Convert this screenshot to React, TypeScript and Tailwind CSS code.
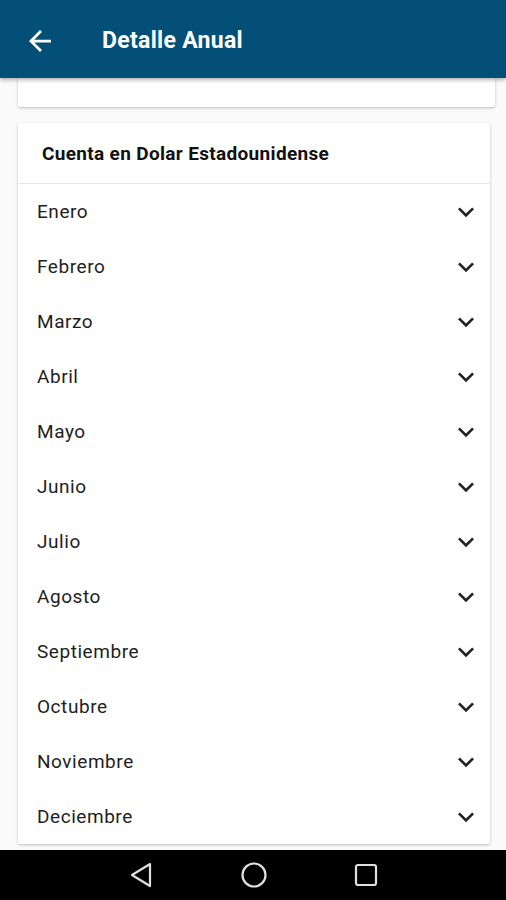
const months = [
  "Enero",
  "Febrero",
  "Marzo",
  "Abril",
  "Mayo",
  "Junio",
  "Julio",
  "Agosto",
  "Septiembre",
  "Octubre",
  "Noviembre",
  "Deciembre",
];

function ChevronDown() {
  return (
    <svg viewBox="0 0 24 24" className="h-[32px] w-[32px]" fill="#222">
      <path d="M16.59 8.59L12 13.17 7.41 8.59 6 10l6 6 6-6z" />
    </svg>
  );
}

export default function App() {
  return (
    <div
      className="flex h-[900px] w-[506px] flex-col overflow-hidden bg-[#fafafa]"
      style={{ fontFamily: "Roboto, 'Noto Sans', sans-serif" }}
    >
      <header className="relative z-10 flex h-[78px] shrink-0 items-center bg-[#034f78] pt-[4px] shadow-[0_2px_4px_rgba(0,0,0,0.3)]">
        <svg viewBox="4 4 16 16" className="ml-[28px] h-[22px] w-[24px]" fill="white">
          <path d="M20 11H7.83l5.59-5.59L12 4l-8 8 8 8 1.41-1.41L7.83 13H20v-2z" />
        </svg>
        <h1 className="ml-[50px] text-[23px] font-bold tracking-[0.3px] text-white">Detalle Anual</h1>
      </header>

      <div className="flex flex-1 flex-col">
        <div className="ml-[18px] mr-[11px] h-[29px] rounded-b-[2px] bg-white shadow-[0_1px_3px_rgba(0,0,0,0.25)]" />

        <div className="ml-[18px] mr-[16px] mt-[16px] rounded-[2px] bg-white shadow-[0_1px_3px_rgba(0,0,0,0.25)]">
          <div className="flex h-[61px] items-center border-b border-[#e6e6e6] pl-[24px] pt-[2px] text-[19px] font-bold tracking-[0.33px] text-[#111]">
            Cuenta en Dolar Estadounidense
          </div>
          {months.map((month) => (
            <div key={month} className="flex h-[55px] items-center justify-between pl-[19px] pr-[8px]">
              <span className="pt-[2px] text-[19px] tracking-[0.55px] text-[#1e1e1e]">{month}</span>
              <ChevronDown />
            </div>
          ))}
        </div>
      </div>

      <nav className="flex h-[50px] shrink-0 items-center bg-black">
        <svg viewBox="0 0 24 26" className="ml-[129px] h-[26px] w-[24px]" fill="none" stroke="#e0e0e0" strokeWidth="2.2" strokeLinejoin="round">
          <path d="M21 2 L3 13 L21 24 Z" />
        </svg>
        <svg viewBox="0 0 28 28" className="ml-[87px] h-[28px] w-[28px]" fill="none" stroke="#e0e0e0" strokeWidth="2.2">
          <circle cx="14" cy="14" r="11.5" />
        </svg>
        <svg viewBox="0 0 24 24" className="ml-[86px] h-[24px] w-[24px]" fill="none" stroke="#e0e0e0" strokeWidth="2.2">
          <rect x="2" y="2" width="20" height="20" rx="2" />
        </svg>
      </nav>
    </div>
  );
}
